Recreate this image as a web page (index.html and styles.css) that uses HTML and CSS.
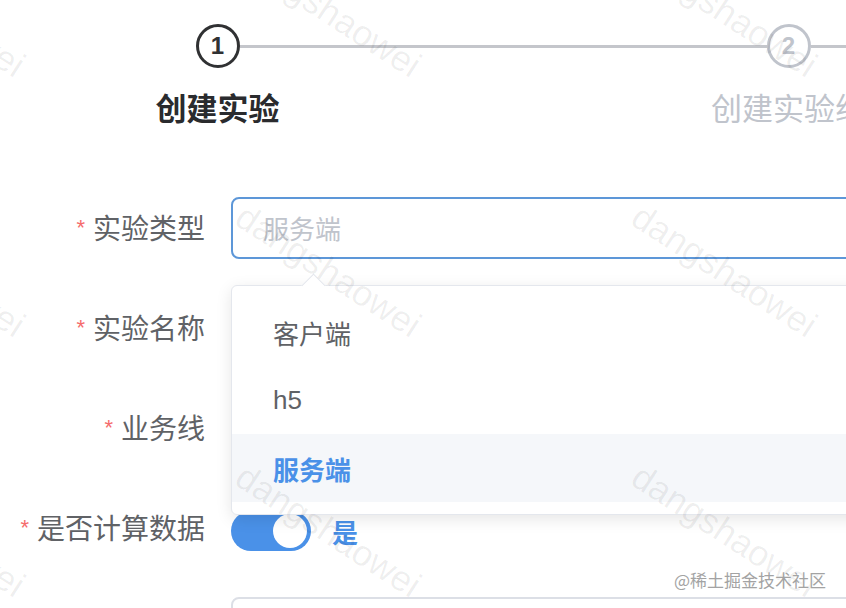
FILE: index.html
```html
<!DOCTYPE html>
<html lang="zh-CN">
<head>
<meta charset="utf-8">
<title>创建实验</title>
<link rel="stylesheet" href="styles.css">
</head>
<body>
<div class="page">
  <div class="steps">
    <div class="step is-process">
      <div class="step-head">
        <span class="step-line is-hidden"></span>
        <span class="step-icon">1</span>
        <span class="step-line"></span>
      </div>
      <div class="step-title">创建实验</div>
    </div>
    <div class="step is-wait">
      <div class="step-head">
        <span class="step-line"></span>
        <span class="step-icon">2</span>
        <span class="step-line"></span>
      </div>
      <div class="step-title">创建实验组</div>
    </div>
  </div>

  <form class="form">
    <div class="form-item">
      <label class="form-label"><span class="req">*</span>实验类型</label>
      <div class="form-control">
        <div class="input is-focus"><span class="placeholder">服务端</span></div>
        <div class="dropdown">
          <span class="dropdown-arrow"></span>
          <ul class="dropdown-list">
            <li class="dropdown-item">客户端</li>
            <li class="dropdown-item">h5</li>
            <li class="dropdown-item is-selected">服务端</li>
          </ul>
        </div>
      </div>
    </div>
    <div class="form-item">
      <label class="form-label"><span class="req">*</span>实验名称</label>
      <div class="form-control"><div class="input"></div></div>
    </div>
    <div class="form-item">
      <label class="form-label"><span class="req">*</span>业务线</label>
      <div class="form-control"><div class="input"></div></div>
    </div>
    <div class="form-item">
      <label class="form-label"><span class="req">*</span>是否计算数据</label>
      <div class="form-control switch-wrap">
        <span class="switch"><span class="switch-knob"></span></span>
        <span class="switch-label">是</span>
      </div>
    </div>
    <div class="form-item">
      <label class="form-label"></label>
      <div class="form-control"><div class="input"></div></div>
    </div>
  </form>

  <div class="watermarks" aria-hidden="true">
    <span class="wm">dangshaowei</span><span class="wm">dangshaowei</span><span class="wm">dangshaowei</span>
    <span class="wm">dangshaowei</span><span class="wm">dangshaowei</span><span class="wm">dangshaowei</span>
    <span class="wm">dangshaowei</span><span class="wm">dangshaowei</span><span class="wm">dangshaowei</span>
  </div>
  <div class="credit">@稀土掘金技术社区</div>
</div>
</body>
</html>
```

FILE: styles.css
```css
html, body {
  margin: 0;
  padding: 0;
  background: #ffffff;
}
body {
  width: 846px;
  height: 608px;
  overflow: hidden;
  font-family: "Liberation Sans", "Noto Sans CJK SC", sans-serif;
}
.page {
  position: relative;
  width: 846px;
  height: 608px;
  overflow: hidden;
}

/* Steps */
.steps {
  display: flex;
  margin-left: -68px;
  padding-top: 24px;
}
.step {
  flex: 0 0 571px;
  display: flex;
  flex-direction: column;
  align-items: center;
}
.step-head {
  display: flex;
  align-items: center;
  width: 100%;
}
.step-line {
  flex: 1;
  height: 3px;
  background: #c4c6cb;
}
.step-line.is-hidden {
  background: transparent;
}
.step-icon {
  box-sizing: border-box;
  width: 44px;
  height: 44px;
  border-radius: 50%;
  border: 3px solid #303133;
  display: flex;
  align-items: center;
  justify-content: center;
  font-size: 24px;
  font-weight: bold;
  color: #303133;
}
.is-wait .step-icon {
  border-color: #c0c4cc;
  color: #c0c4cc;
}
.step-title {
  margin-top: 22px;
  font-size: 31px;
  line-height: 40px;
  font-weight: bold;
  color: #2a2b2e;
  white-space: nowrap;
}
.is-wait .step-title {
  font-weight: normal;
  color: #c0c4cc;
}

/* Form */
.form {
  margin: 67px 0 0;
  width: 1200px;
}
.form-item {
  display: flex;
  align-items: center;
  height: 62px;
  margin-bottom: 38px;
}
.form-label {
  width: 205px;
  flex: 0 0 205px;
  margin-right: 26px;
  text-align: right;
  font-size: 28px;
  color: #606266;
  white-space: nowrap;
  margin-top: -2px;
}
.req {
  color: #f56c6c;
  font-size: 22px;
  margin-right: 8px;
  vertical-align: 4px;
}
.form-control {
  flex: 1;
  position: relative;
  height: 100%;
}
.input {
  box-sizing: border-box;
  height: 62px;
  border: 2px solid #dcdfe6;
  border-radius: 8px;
  display: flex;
  align-items: center;
  padding-left: 30px;
  background: #fff;
}
.input.is-focus {
  border-color: #5d97d8;
}
.placeholder {
  font-size: 26px;
  color: #c0c4cc;
  margin-top: -2px;
}

/* Dropdown */
.dropdown {
  position: absolute;
  z-index: 5;
  top: 88px;
  left: 0;
  width: 760px;
  box-sizing: border-box;
  background: #fff;
  border: 1px solid #e4e7ed;
  border-radius: 6px;
  box-shadow: 0 4px 16px rgba(0, 0, 0, 0.1);
}
.dropdown-arrow {
  position: absolute;
  top: -9px;
  left: 73px;
  width: 16px;
  height: 16px;
  background: #fff;
  border-top: 1px solid #e4e7ed;
  border-left: 1px solid #e4e7ed;
  transform: rotate(45deg);
}
.dropdown-list {
  list-style: none;
  margin: 0;
  padding: 12px 0;
  position: relative;
}
.dropdown-item {
  height: 68px;
  display: flex;
  align-items: center;
  padding-left: 41px;
  font-size: 26px;
  color: #606266;
}
.dropdown-item.is-selected {
  background: #f5f7fa;
  color: #4a91e8;
  font-weight: bold;
}

/* Switch */
.switch-wrap {
  display: flex;
  align-items: center;
}
.switch {
  box-sizing: border-box;
  width: 80px;
  height: 40px;
  border-radius: 20px;
  background: #4a91e8;
  display: flex;
  align-items: center;
  justify-content: flex-end;
  padding-right: 4px;
  margin-top: 6px;
}
.switch-knob {
  width: 34px;
  height: 34px;
  border-radius: 50%;
  background: #fff;
}
.switch-label {
  margin-left: 21px;
  margin-top: 6px;
  font-size: 26px;
  font-weight: bold;
  color: #4a91e8;
}

/* Watermarks */
.watermarks {
  position: absolute;
  inset: 0;
  z-index: 10;
  pointer-events: none;
  display: grid;
  grid-template-columns: repeat(3, 396px);
  grid-auto-rows: 260px;
  margin: -62px 0 0 -147px;
  width: 1200px;
  height: 800px;
}
.wm {
  display: block;
  font-size: 36px;
  line-height: 36px;
  color: rgba(0, 0, 0, 0.065);
  white-space: nowrap;
  transform-origin: 0 0;
  transform: rotate(33deg);
}

.credit {
  position: absolute;
  z-index: 11;
  right: 20px;
  bottom: 16px;
  font-size: 17px;
  color: #a3a3a3;
  font-family: "Noto Sans CJK SC", sans-serif;
  text-shadow: 0 0 2px #fff, 0 0 2px #fff;
}
```
